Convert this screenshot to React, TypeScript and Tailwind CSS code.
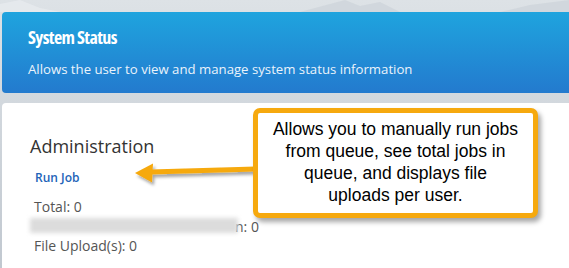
import React from "react";

export default function App() {
  return (
    <div
      className="relative w-[569px] h-[268px] overflow-hidden bg-gradient-to-b from-[#dde2e6] to-[#c1c8d0] pl-[2px] pt-[12px]"
      style={{ fontFamily: '"Open Sans", sans-serif' }}
    >
      {/* faint mountains in background */}
      <svg className="absolute left-0 top-0" width="569" height="110" viewBox="0 0 569 110">
        <path d="M300 12 L330 4 L345 0 L360 6 L380 2 L400 12 Z" fill="#c9d0d7" opacity="0.6" />
        <path d="M500 12 L530 5 L569 0 L569 12 Z" fill="#c9d0d7" opacity="0.6" />
        <path d="M0 4 L20 0 L40 8 L60 12 L0 12 Z" fill="#e8ecef" opacity="0.7" />
      </svg>

      <div className="relative h-[81px] rounded-l-[4px] bg-gradient-to-b from-[#1fa4de] to-[#237ace] pl-[26px] pt-[13px]">
        <div className="text-[18px] font-bold leading-[24px] text-white [font-stretch:75%] tracking-[-0.6px]">
          System Status
        </div>
        <div className="mt-[11px] text-[13.2px] leading-[18px] text-[#eaf3fb]">
          Allows the user to view and manage system status information
        </div>
      </div>

      <div className="relative mt-[10px] h-[200px] rounded-l-[4px] bg-white pl-[28px] pt-[31px]">
        <div className="text-[18px] leading-[24px] text-[#333]">Administration</div>
        <div className="mt-[12px] pl-[5px] text-[12px] font-semibold leading-[16px] text-[#2263b8]">Run Job</div>
        <div className="mt-[11px] pl-[4px] text-[14px] leading-[19.5px] text-[#555]">
          <div>Total: 0</div>
          <div className="relative flex">
            <span className="inline-block w-[201px]" />
            <span>n: 0</span>
            <div className="absolute left-[-4px] top-[1px] h-[15px] w-[208px] bg-[#dcdcdc] blur-[2px]" />
          </div>
          <div>File Upload(s): 0</div>
        </div>
      </div>

      {/* arrow */}
      <svg className="absolute left-0 top-0" width="569" height="268" viewBox="0 0 569 268">
        <defs>
          <filter id="sh" x="-20%" y="-50%" width="140%" height="200%">
            <feDropShadow dx="2" dy="3" stdDeviation="1.5" floodColor="#000" floodOpacity="0.35" />
          </filter>
        </defs>
        <g filter="url(#sh)">
          <path d="M150 169.5 L256 166.5 L256 171.5 L150 174.5 Z" fill="#f6a90e" />
          <path d="M135 173 L153 163.5 L152 182.5 Z" fill="#f6a90e" />
        </g>
      </svg>

      {/* callout */}
      <div className="absolute left-[253px] top-[108px] flex h-[110px] w-[285px] items-center justify-center rounded-[7px] border-[5px] border-[#f6a90e] bg-white shadow-[3px_4px_5px_rgba(0,0,0,0.35)]">
        <div
          className="text-center text-[17.5px] leading-[21.8px] text-black"
          style={{ fontFamily: '"Liberation Sans", Arial, sans-serif' }}
        >
          Allows you to manually run jobs
          <br />
          from queue, see total jobs in
          <br />
          queue, and displays file
          <br />
          uploads per user.
        </div>
      </div>
    </div>
  );
}
